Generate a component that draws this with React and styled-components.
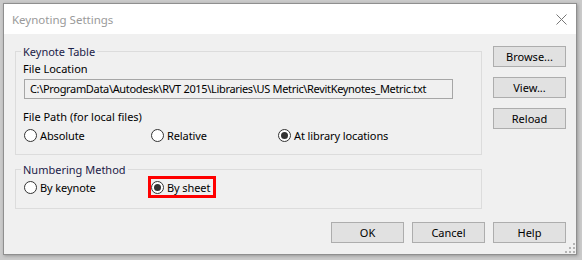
import { createGlobalStyle } from "styled-components";
import styled from "styled-components";

const GlobalStyle = createGlobalStyle`
  html, body {
    margin: 0;
    padding: 0;
    background: #cacaca;
  }
  body {
    font-family: "Noto Sans", "Open Sans", sans-serif;
    font-size: 11px;
    color: #000;
  }
`;

const RADIO_OPTIONS = ["Absolute", "Relative", "At library locations"];
const NUMBERING_OPTIONS = ["By keynote", "By sheet"];

function Radio({ label, checked, highlight }) {
  return (
    <RadioLabel $highlight={highlight}>
      <Circle $checked={checked} />
      <span>{label}</span>
    </RadioLabel>
  );
}

function ResizeGrip() {
  const dots = [[8, 0], [8, 4], [4, 4], [8, 8], [4, 8], [0, 8]];
  return (
    <Grip width="10" height="10" viewBox="0 0 10 10">
      {dots.map(([x, y]) => (
        <rect key={`${x}-${y}`} x={x} y={y} width="2" height="2" fill="#b4b4b4" />
      ))}
    </Grip>
  );
}

export default function App() {
  return (
    <>
      <GlobalStyle />
      <Desktop>
        <Window>
          <TitleBar>
            <Title>Keynoting Settings</Title>
            <CloseIcon width="11" height="11" viewBox="0 0 11 11">
              <path d="M0.5 0.5 L10.5 10.5 M10.5 0.5 L0.5 10.5" stroke="#777" strokeWidth="1" />
            </CloseIcon>
          </TitleBar>

          <Body>
            <Groups>
              <Group>
                <Legend>Keynote Table</Legend>
                <Label>File Location</Label>
                <PathField>C:\ProgramData\Autodesk\RVT 2015\Libraries\US Metric\RevitKeynotes_Metric.txt</PathField>
                <Label $gap={10}>File Path (for local files)</Label>
                <RadioRow $bottom={11}>
                  {RADIO_OPTIONS.map((opt, i) => (
                    <Radio key={opt} label={opt} checked={i === 2} />
                  ))}
                </RadioRow>
              </Group>

              <Group>
                <Legend>Numbering Method</Legend>
                <RadioRow $bottom={13} $top={2}>
                  {NUMBERING_OPTIONS.map((opt, i) => (
                    <Radio key={opt} label={opt} checked={i === 1} highlight={i === 1} />
                  ))}
                </RadioRow>
              </Group>
            </Groups>

            <SideButtons>
              <Button>Browse...</Button>
              <Button>View...</Button>
              <Button>Reload</Button>
            </SideButtons>

            <Footer>
              <Button>OK</Button>
              <Button>Cancel</Button>
              <Button>Help</Button>
            </Footer>

            <ResizeGrip />
          </Body>
        </Window>
      </Desktop>
    </>
  );
}

const Desktop = styled.div`
  width: 582px;
  height: 260px;
  box-sizing: border-box;
  padding: 3px 5px 5px 3px;
  background: #cacaca;
`;

const Window = styled.div`
  width: 574px;
  height: 252px;
  box-sizing: border-box;
  border: 1px solid #8f8f8f;
  box-shadow: 1px 1px 3px rgba(0, 0, 0, 0.25);
  display: flex;
  flex-direction: column;
  background: #f0f0f0;
`;

const TitleBar = styled.div`
  height: 30px;
  background: #fff;
  display: flex;
  align-items: center;
  padding: 0 8px;
`;

const Title = styled.div`
  flex: 1;
  color: #9a9a9a;
  font-size: 11.5px;
  padding-top: 1px;
`;

const CloseIcon = styled.svg`
  display: block;
  margin-right: 1px;
  margin-top: 1px;
`;

const Body = styled.div`
  flex: 1;
  position: relative;
  display: grid;
  grid-template-columns: 467px 73px;
  grid-template-rows: auto auto;
  column-gap: 11px;
  align-content: start;
  padding: 10px 0 0 11px;
`;

const Groups = styled.div`
  display: flex;
  flex-direction: column;
  gap: 7px;
`;

const Group = styled.fieldset`
  margin: 0;
  padding: 0 7px;
  min-width: 0;
  border: 1px solid #dcdcdc;
  display: flex;
  flex-direction: column;
`;

const Legend = styled.legend`
  padding: 0 2px;
  margin-left: -2px;
  line-height: 15px;
  color: #1b2148;
`;

const Label = styled.div`
  line-height: 15px;
  margin-top: ${(p) => p.$gap ?? 2}px;
`;

const PathField = styled.div`
  margin: 3px 0 0 1px;
  width: 429px;
  height: 20px;
  box-sizing: border-box;
  border: 1px solid #a6a6a6;
  padding-left: 5px;
  line-height: 18px;
  letter-spacing: -0.33px;
  white-space: nowrap;
  overflow: hidden;
`;

const RadioRow = styled.div`
  display: grid;
  grid-template-columns: 127px 127px 1fr;
  margin-top: ${(p) => p.$top ?? 3}px;
  margin-bottom: ${(p) => p.$bottom}px;
  padding-left: 1px;
`;

const RadioLabel = styled.div`
  display: inline-flex;
  align-items: center;
  gap: 3px;
  height: 16px;
  line-height: 15px;
  justify-self: start;
  padding-right: 3px;
  letter-spacing: -0.1px;
  outline: ${(p) => (p.$highlight ? "3px solid #ff0000" : "none")};
`;

const Circle = styled.span`
  width: 13px;
  height: 13px;
  box-sizing: border-box;
  border-radius: 50%;
  border: 1px solid #333;
  background: #fff;
  display: inline-flex;
  align-items: center;
  justify-content: center;

  &::after {
    content: "";
    width: 7px;
    height: 7px;
    border-radius: 50%;
    background: #333;
    display: ${(p) => (p.$checked ? "block" : "none")};
  }
`;

const SideButtons = styled.div`
  display: flex;
  flex-direction: column;
  gap: 10px;
  padding-top: 2px;
`;

const Button = styled.div`
  width: 73px;
  height: 21px;
  box-sizing: border-box;
  border: 1px solid #adadad;
  background: #e1e1e1;
  display: flex;
  align-items: center;
  justify-content: center;
`;

const Footer = styled.div`
  grid-column: 1 / 3;
  display: flex;
  justify-content: flex-end;
  gap: 8px;
  margin-top: 13px;
`;

const Grip = styled.svg`
  position: absolute;
  right: 1px;
  bottom: 1px;
`;
